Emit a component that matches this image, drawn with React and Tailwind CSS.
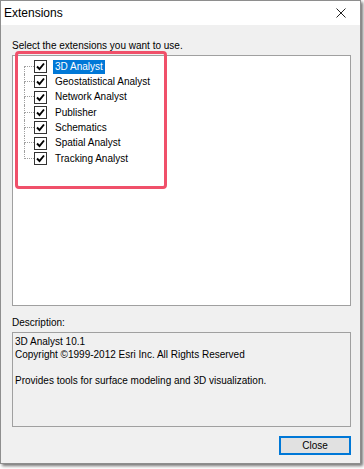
import React from 'react';

const extensions = [
  '3D Analyst',
  'Geostatistical Analyst',
  'Network Analyst',
  'Publisher',
  'Schematics',
  'Spatial Analyst',
  'Tracking Analyst',
];

const CheckBox = () => (
  <div className="w-[13px] h-[13px] border border-[#333] bg-white flex items-center justify-center shrink-0">
    <svg width="9" height="9" viewBox="0 0 9 9">
      <path d="M1 4.5 L3.5 7 L8 1.5" fill="none" stroke="#000" strokeWidth="1.9" />
    </svg>
  </div>
);

// one tree row with its dotted connector
const TreeRow = ({ label, first, last, selected }) => (
  <div className="flex items-center h-[15.33px]">
    <div className="ml-[11px] w-[10px] h-full flex flex-col shrink-0">
      <div
        className={
          'h-1/2 border-b border-dotted border-b-[#a0a0a0] ' +
          (first ? '' : 'border-l border-l-[#a0a0a0]')
        }
      />
      <div className={'h-1/2 ' + (last ? '' : 'border-l border-dotted border-l-[#a0a0a0]')} />
    </div>
    <CheckBox />
    <span
      className={
        'ml-[6px] px-[2px] leading-[14px] ' +
        (selected ? 'bg-[#0078d7] text-white' : 'text-black')
      }
    >
      {label}
    </span>
  </div>
);

export default function App() {
  return (
    <div
      className="relative w-[364px] h-[469px] bg-white text-[10px] text-black overflow-hidden"
      style={{ fontFamily: '"Liberation Sans", Arial, sans-serif' }}
    >
      <div className="w-[361px] h-[464px] border border-[#8e8e8e] shadow-[2px_2px_3px_rgba(0,0,0,0.55)] flex flex-col bg-[#f0f0f0]">
        {/* title bar */}
        <div className="h-[24px] bg-white flex items-center justify-between pl-[3px] pr-[14px]">
          <span className="text-[12px] leading-none">Extensions</span>
          <svg width="10" height="10" viewBox="0 0 10 10">
            <path d="M0.5 0.5 L9.5 9.5 M9.5 0.5 L0.5 9.5" stroke="#222" strokeWidth="1" />
          </svg>
        </div>

        {/* body */}
        <div className="flex-1 flex flex-col pl-[11px] pr-[9px]">
          <div className="mt-[14px] leading-[13px]">Select the extensions you want to use.</div>
          <div className="mt-[3px] h-[251px] bg-white border border-[#a0a0a0] pt-[3px]">
            {extensions.map((name, i) => (
              <TreeRow
                key={name}
                label={name}
                first={i === 0}
                last={i === extensions.length - 1}
                selected={i === 0}
              />
            ))}
          </div>

          <div className="mt-[10px] leading-[13px]">Description:</div>
          <div className="mt-[3px] h-[95px] border border-[#a0a0a0] px-[2px] pt-[2px] leading-[13px]">
            <div>3D Analyst 10.1</div>
            <div>Copyright ©1999-2012 Esri Inc. All Rights Reserved</div>
            <div>&nbsp;</div>
            <div>Provides tools for surface modeling and 3D visualization.</div>
          </div>

          <div className="mt-[9px] flex justify-end">
            <button
              type="button"
              className="w-[72px] h-[19px] bg-[#e1e1e1] border-2 border-[#0078d7] text-[10px] leading-none"
            >
              Close
            </button>
          </div>
        </div>
      </div>

      {/* red annotation box */}
      <div className="absolute left-[15px] top-[51px] w-[152px] h-[138px] border-[3px] border-[#f0506a] rounded-[4px]" />
    </div>
  );
}
